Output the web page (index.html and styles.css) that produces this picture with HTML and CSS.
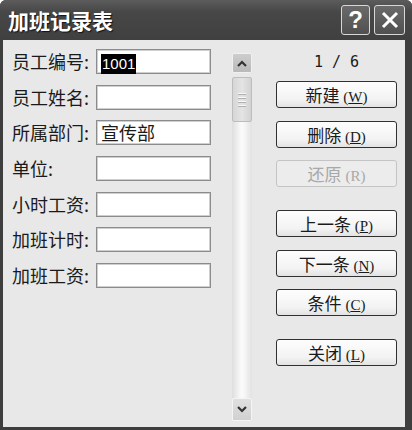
FILE: index.html
```html
<!DOCTYPE html>
<html lang="zh-CN">
<head>
    <meta charset="UTF-8">
    <meta name="viewport" content="width=device-width, initial-scale=1.0">
    <title>加班记录表</title>
    <link rel="stylesheet" href="styles.css">
</head>
<body>
    <div class="window">
        <div class="titlebar">
            <div class="title">加班记录表</div>
            <div class="ctrls">
                <div class="ctrl">?</div>
                <div class="ctrl close">
                    <svg width="18" height="18" viewBox="0 0 18 18">
                        <path d="M2 2 L16 16 M16 2 L2 16" stroke="#fff" stroke-width="3" fill="none"/>
                    </svg>
                </div>
            </div>
        </div>
        <div class="client">
            <div class="form">
                <div class="label">员工编号:</div>
                <div class="field"><span class="sel">1001</span></div>
                <div class="label">员工姓名:</div>
                <div class="field"></div>
                <div class="label">所属部门:</div>
                <div class="field">宣传部</div>
                <div class="label">单位:</div>
                <div class="field"></div>
                <div class="label">小时工资:</div>
                <div class="field"></div>
                <div class="label">加班计时:</div>
                <div class="field"></div>
                <div class="label">加班工资:</div>
                <div class="field"></div>
            </div>

            <div class="scrollbar">
                <div class="sb-btn">
                    <svg width="10" height="7" viewBox="0 0 10 7">
                        <path d="M1 6 L5 2 L9 6" stroke="#333" stroke-width="2.2" fill="none"/>
                    </svg>
                </div>
                <div class="sb-thumb">
                    <span></span><span></span><span></span><span></span>
                </div>
                <div class="sb-track"></div>
                <div class="sb-btn down">
                    <svg width="10" height="7" viewBox="0 0 10 7">
                        <path d="M1 1 L5 5 L9 1" stroke="#333" stroke-width="2.2" fill="none"/>
                    </svg>
                </div>
            </div>

            <div class="actions">
                <div class="counter">1 / 6</div>
                <div class="btn">新建 <span class="key">(<u>W</u>)</span></div>
                <div class="btn">删除 <span class="key">(<u>D</u>)</span></div>
                <div class="btn disabled">还原 <span class="key">(R)</span></div>
                <div class="btn group">上一条 <span class="key">(<u>P</u>)</span></div>
                <div class="btn">下一条 <span class="key">(<u>N</u>)</span></div>
                <div class="btn">条件 <span class="key">(<u>C</u>)</span></div>
                <div class="btn group">关闭 <span class="key">(<u>L</u>)</span></div>
            </div>
        </div>
    </div>
</body>
</html>
```

FILE: styles.css
```css
body {
    margin: 0;
    font-family: "Noto Sans CJK SC", "Liberation Sans", sans-serif;
    color: #1a1a1a;
}

.window {
    width: 412px;
    height: 430px;
    display: flex;
    flex-direction: column;
    background: #3e3e3e;
    border-radius: 6px 6px 0 0;
}

/* title bar */
.titlebar {
    height: 40px;
    display: flex;
    align-items: center;
    justify-content: space-between;
    padding: 0 8px 0 8px;
    background: linear-gradient(#5c5c5c, #474747 30%, #404040);
    border-radius: 6px 6px 0 0;
}

.title {
    font-size: 21px;
    font-weight: 700;
    color: #fff;
    text-shadow: 1px 1px 1px #111;
}

.ctrls {
    display: flex;
    gap: 4px;
    margin-right: -1px;
}

.ctrl {
    width: 27px;
    height: 28px;
    border: 1px solid #d8d8d8;
    border-radius: 3px;
    background: linear-gradient(#6a6a6a, #505050);
    color: #fff;
    font-family: "Liberation Sans", sans-serif;
    font-size: 24px;
    font-weight: 700;
    display: flex;
    align-items: center;
    justify-content: center;
}

.ctrl.close {
    width: 29px;
}

/* client area */
.client {
    flex: 1;
    margin: 0 7px 3px 3px;
    background: #e8e8e8;
    display: flex;
}

.form {
    display: grid;
    grid-template-columns: 84px 115px;
    grid-auto-rows: 25px;
    row-gap: 10.67px;
    align-items: center;
    padding: 9px 0 0 9px;
    margin-right: 21px;
    align-content: start;
}

.label {
    font-size: 18px;
    line-height: 25px;
}

.field {
    height: 25px;
    box-sizing: border-box;
    border: 1px solid #8c8c8c;
    box-shadow: inset 0 0 0 1px #cfcfcf;
    background: #fff;
    font-size: 18px;
    line-height: 23px;
    padding-left: 4px;
}

.sel {
    font-family: "Liberation Sans", sans-serif;
    font-size: 15px;
    background: #000;
    color: #fff;
    padding: 1px 1px 2px 1px;
}

/* scrollbar */
.scrollbar {
    width: 20px;
    margin: 13px 0 6px 0;
    display: flex;
    flex-direction: column;
}

.sb-btn {
    height: 20px;
    box-sizing: border-box;
    border: 1px solid #f0f0f0;
    border-radius: 2px;
    background: linear-gradient(#cdcdcd, #b9b9b9);
    display: flex;
    align-items: center;
    justify-content: center;
}

.sb-btn.down {
    height: 23px;
    background: linear-gradient(#e0e0e0, #d0d0d0);
    border-color: #f4f4f4;
}

.sb-thumb {
    height: 45px;
    margin-top: 4px;
    box-sizing: border-box;
    border: 1px solid #bdbdbd;
    border-radius: 2px;
    background: linear-gradient(to right, #d6d6d6, #e4e4e4 50%, #d2d2d2);
    display: flex;
    flex-direction: column;
    align-items: center;
    justify-content: center;
    gap: 2px;
}

.sb-thumb span {
    width: 8px;
    height: 1px;
    background: #f8f8f8;
    border-bottom: 1px solid #b0b0b0;
}

.sb-track {
    flex: 1;
    background: linear-gradient(to right, #dedede, #fafafa 45%, #fafafa 55%, #e2e2e2);
}

/* buttons */
.actions {
    width: 121px;
    margin-left: 24px;
    padding-top: 12px;
    display: flex;
    flex-direction: column;
    gap: 12.5px;
}

.counter {
    font-family: "DejaVu Sans Mono", monospace;
    font-size: 15px;
    line-height: 20px;
    text-align: center;
    margin-bottom: -3.5px;
}

.btn {
    height: 27px;
    box-sizing: border-box;
    border: 1px solid #303030;
    border-radius: 3px;
    background: linear-gradient(#fdfdfd, #f3f3f3 70%, #e2e2e2);
    font-size: 17px;
    line-height: 25px;
    text-align: center;
}

.btn.group {
    margin-top: 10.5px;
}

.btn.disabled {
    border-color: #c4c4c4;
    color: #a8a8a8;
    background: #ececec;
}

.key {
    font-family: "Liberation Serif", serif;
    font-size: 15px;
}
```
